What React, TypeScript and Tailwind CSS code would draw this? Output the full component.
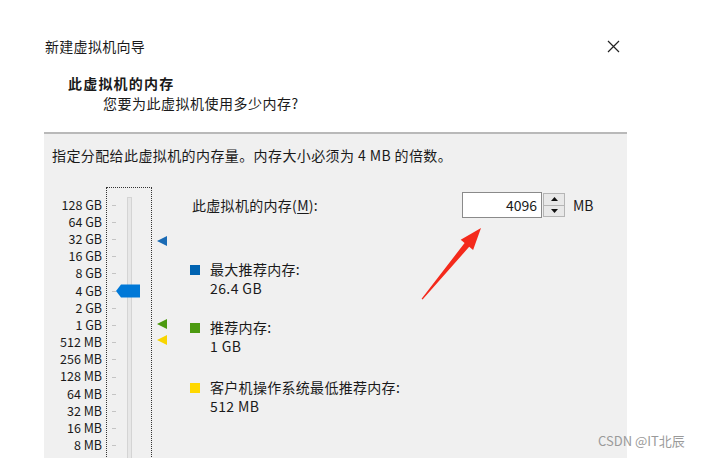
import React from 'react';

const sizes = [
  '128 GB', '64 GB', '32 GB', '16 GB', '8 GB', '4 GB', '2 GB', '1 GB',
  '512 MB', '256 MB', '128 MB', '64 MB', '32 MB', '16 MB', '8 MB',
];

function Marker({ top, color }: { top: number; color: string }) {
  return (
    <svg className="absolute left-0" style={{ top: top - 5 }} width="10" height="10" viewBox="0 0 10 10">
      <polygon points="0,5 10,0 10,10" fill={color} />
    </svg>
  );
}

function Legend({ color, label, value, className }: { color: string; label: string; value: string; className?: string }) {
  return (
    <div className={`flex items-start ${className ?? ''}`}>
      <div className={`w-[10px] h-[10px] mt-[5px] ${color}`} />
      <div className="ml-[10px] leading-[19px]">
        <div className="tracking-[0.3px]">{label}</div>
        <div className="tracking-[0.4px]">{value}</div>
      </div>
    </div>
  );
}

export default function App() {
  return (
    <div
      className="relative w-[704px] h-[458px] overflow-hidden bg-white text-[#1a1a1a] text-[14px]"
      style={{ fontFamily: '"Noto Sans CJK SC", "Noto Sans", sans-serif' }}
    >
      {/* header */}
      <div className="flex items-center justify-between pt-[36px] pl-[45px] pr-[84px] h-[56px] leading-[20px]">
        <span className="tracking-[0.3px]">新建虚拟机向导</span>
        <svg width="13" height="13" viewBox="0 0 13 13" className="mt-[1px]">
          <path d="M1 1 L12 12 M12 1 L1 12" stroke="#222" strokeWidth="1.2" />
        </svg>
      </div>
      <div className="pl-[68px] mt-[17px] leading-[20px] font-bold tracking-[1.2px]">此虚拟机的内存</div>
      <div className="pl-[103px] leading-[20px] tracking-[0.5px]">您要为此虚拟机使用多少内存?</div>

      {/* panel */}
      <div className="ml-[44px] mt-[19px] w-[583px] h-[400px] border-t-2 border-[#b9b9b9] bg-[#f0f0f0] pl-[8px] pt-[11px]">
        <div className="leading-[20px] tracking-[0.4px]">指定分配给此虚拟机的内存量。内存大小必须为 4 MB 的倍数。</div>

        <div className="flex items-start mt-[22px]">
          {/* scale labels */}
          <div className="w-[50px] pt-[8.6px] text-[12.5px] text-right">
            {sizes.map((s) => (
              <div key={s} className="h-[17.2px] leading-[17.2px] whitespace-nowrap">{s}</div>
            ))}
          </div>

          {/* slider */}
          <div className="relative ml-[4px] w-[46px] h-[300px] border border-dotted border-[#333]">
            <div className="absolute left-[5px] pt-[8.6px]">
              {sizes.map((s) => (
                <div key={s} className="h-[17.2px] flex items-center">
                  <div className="w-[4px] h-px bg-[#c4c4c4]" />
                </div>
              ))}
            </div>
            <div className="absolute left-[20px] top-[9px] w-[5px] h-[300px] bg-[#e7e7e7] border border-[#d4d4d4]" />
            <svg className="absolute left-[9px] top-[96px]" width="24" height="14" viewBox="0 0 24 14">
              <polygon points="0,7 5,0.5 24,0.5 24,13.5 5,13.5" fill="#0078d7" />
            </svg>
          </div>

          {/* markers */}
          <div className="relative ml-[5px] w-[10px] h-[300px]">
            <Marker top={54} color="#1a6bb5" />
            <Marker top={137} color="#4c9a10" />
            <Marker top={153} color="#f8d500" />
          </div>

          {/* right side */}
          <div className="ml-[23px] pt-[5px] flex-1">
            <div className="flex items-center h-[26px]">
              <span className="w-[272px] pl-[2px] tracking-[0.3px]">
                此虚拟机的内存(<span className="underline underline-offset-2">M</span>):
              </span>
              <div className="flex h-[26px]">
                <div className="w-[80px] h-[26px] bg-white border border-[#8a8a8a] text-right pr-[4px] leading-[24px]">4096</div>
                <div className="flex flex-col w-[23px] h-[26px] py-[1px] pl-[1px]">
                  <div className="flex-1 flex items-center justify-center bg-[#e8e8e8] border border-[#b5b5b5]">
                    <svg width="7" height="4" viewBox="0 0 7 4"><polygon points="0,4 3.5,0 7,4" fill="#111" /></svg>
                  </div>
                  <div className="flex-1 flex items-center justify-center bg-[#e8e8e8] border border-[#b5b5b5] border-t-0">
                    <svg width="7" height="4" viewBox="0 0 7 4"><polygon points="0,0 7,0 3.5,4" fill="#111" /></svg>
                  </div>
                </div>
              </div>
              <span className="ml-[8px]">MB</span>
            </div>

            <Legend className="mt-[42px]" color="bg-[#0063b1]" label="最大推荐内存:" value="26.4 GB" />
            <Legend className="mt-[20px]" color="bg-[#4c9a10]" label="推荐内存:" value="1 GB" />
            <Legend className="mt-[22px]" color="bg-[#ffd800]" label="客户机操作系统最低推荐内存:" value="512 MB" />
          </div>
        </div>
      </div>

      {/* annotation arrow */}
      <svg className="absolute left-0 top-0 pointer-events-none" width="704" height="458">
        <polygon
          points="421.6,298.7 464.6,243 460.7,239.8 481,228 473.1,250 469.2,246.8 422.6,299.4"
          fill="#f42a1c"
        />
      </svg>

      {/* watermark */}
      <div className="absolute left-[598px] top-[432px] text-[13px] leading-[18px] text-[#9a9a9a]">CSDN @IT北辰</div>
    </div>
  );
}
